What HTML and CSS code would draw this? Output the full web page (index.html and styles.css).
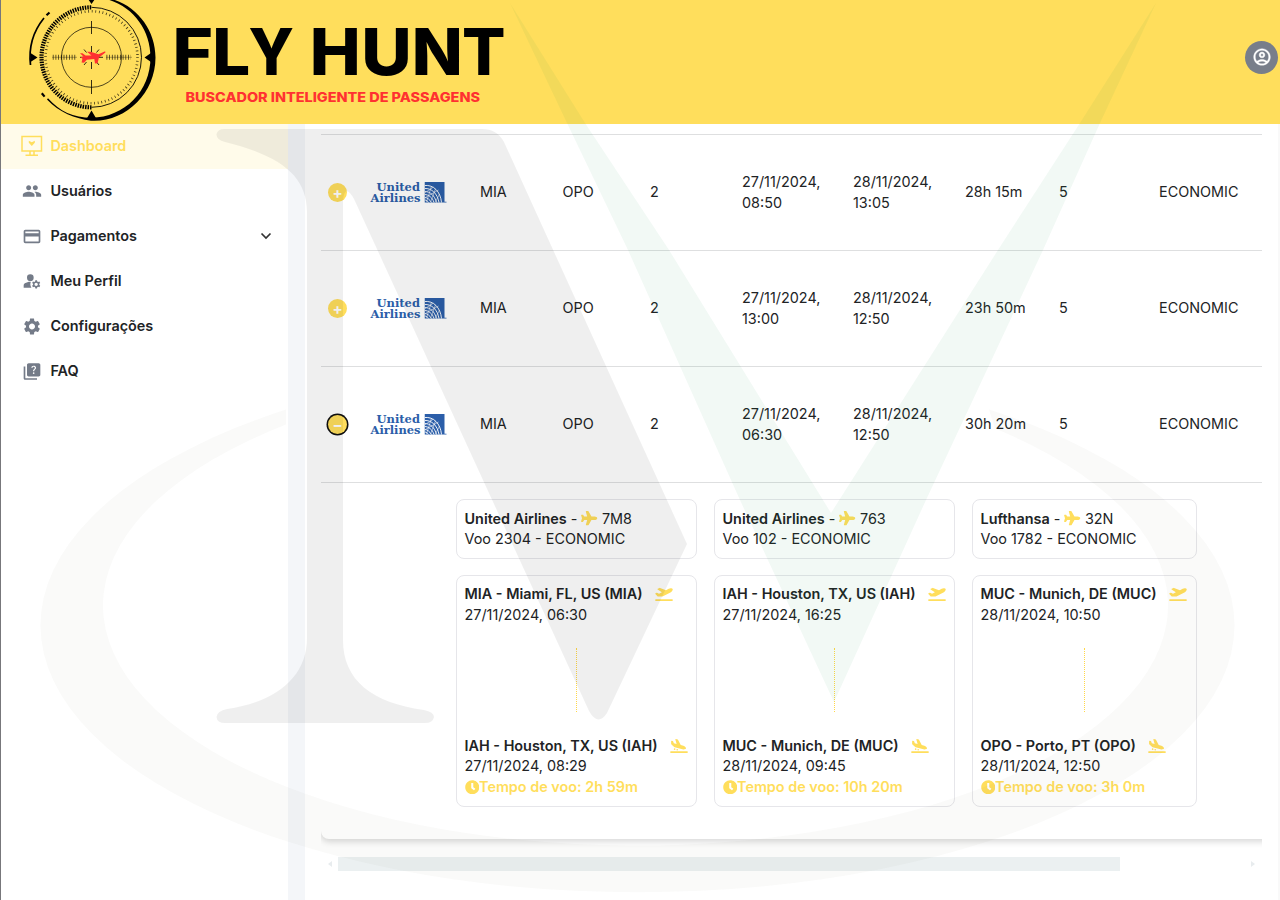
FILE: index.html
```html
<!DOCTYPE html>
<html lang="pt-BR">
<head>
<meta charset="utf-8">
<title>Fly Hunt</title>
<link rel="stylesheet" href="styles.css">
</head>
<body>
<svg class="defs" width="0" height="0" aria-hidden="true">
  <symbol id="plane" viewBox="0 0 576 512"><path d="M480 192H365.71L260.61 8.06A16.014 16.014 0 0 0 246.71 0h-65.5c-10.63 0-18.3 10.17-15.38 20.39L214.86 192H112l-43.2-57.6c-3.02-4.03-7.77-6.4-12.8-6.4H16.01C5.6 128-2.04 137.78.49 147.88L32 256 .49 364.12C-2.04 374.22 5.6 384 16.01 384H56c5.04 0 9.78-2.37 12.8-6.4L112 320h102.86l-49.03 171.6c-2.92 10.22 4.75 20.4 15.38 20.4h65.5c5.74 0 11.04-3.08 13.89-8.06L365.71 320H480c35.35 0 96-28.65 96-64s-60.65-64-96-64z"/></symbol>
  <symbol id="takeoff" viewBox="0 0 640 512"><path d="M624 448H16c-8.84 0-16 7.16-16 16v32c0 8.84 7.16 16 16 16h608c8.84 0 16-7.16 16-16v-32c0-8.84-7.16-16-16-16zM80.55 341.27c6.28 6.84 15.1 10.72 24.33 10.71l130.54-.18a65.62 65.62 0 0 0 29.64-7.12l290.96-147.65c26.74-13.57 50.71-32.94 67.02-58.31 18.31-28.48 20.3-49.09 13.07-63.65-7.21-14.57-24.74-25.27-58.25-27.45-29.85-1.94-59.54 5.92-86.28 19.48l-98.51 49.99-218.7-82.06a17.799 17.799 0 0 0-18-1.11L90.62 67.29c-10.67 5.41-13.25 19.65-5.17 28.53l156.22 98.1-103.21 52.38-72.35-36.47a17.804 17.804 0 0 0-16.07.02L9.91 230.22c-10.44 5.3-13.19 19.12-5.57 28.08l76.21 82.97z"/></symbol>
  <symbol id="landing" viewBox="0 0 640 512"><path d="M624 448H16c-8.84 0-16 7.16-16 16v32c0 8.84 7.16 16 16 16h608c8.84 0 16-7.16 16-16v-32c0-8.84-7.16-16-16-16zM44.81 205.66l88.74 80a62.607 62.607 0 0 0 25.47 13.93l287.6 78.35c26.48 7.21 54.56 8.72 81 1.36 29.67-8.27 43.44-21.21 47.25-35.71 3.83-14.5-1.73-32.71-23.37-54.96-19.28-19.82-44.35-32.79-70.83-40l-97.51-26.56L282.8 30.22c-1.51-5.81-5.95-10.35-11.66-11.91L206.05.58c-10.56-2.88-20.9 5.32-20.71 16.44l47.92 164.21-102.2-27.84-27.59-67.88c-1.93-4.89-6.01-8.57-11.02-9.93L52.72 64.75c-10.34-2.82-20.53 5-20.72 15.88l.23 101.78c.19 8.91 6.03 17.34 12.58 23.25z"/><circle cx="160" cy="372" r="30"/><circle cx="255" cy="392" r="30"/></symbol>
  <symbol id="clock" viewBox="0 0 512 512"><path d="M256 8C119 8 8 119 8 256s111 248 248 248 248-111 248-248S393 8 256 8zm57.1 350.1L224.9 294c-3.1-2.3-4.9-5.9-4.9-9.7V116c0-6.6 5.4-12 12-12h48c6.6 0 12 5.4 12 12v137.7l63.5 46.2c5.4 3.9 6.5 11.4 2.6 16.8l-28.2 38.8c-3.9 5.3-11.4 6.5-16.8 2.6z"/></symbol>
  <symbol id="globe" viewBox="55 1 22.500 21">
    <path fill="#2b5ea9" d="M55 1h20v20.5H55zM75 20.700h2v.8h-2z"/>
    <g fill="none" stroke="#eef1f6" stroke-width="1">
      <path d="M55 4.500c9-1 16 6 17 17M55 7.500c7-.5 13 5 14.500 14M55 10.500c6 0 10 4 12 11M55 13.500c4 0 8 3 9.500 8M55 16.500c3 0 5 2 7 5M55 19c2 0 3 1 4 2.500"/>
      <path stroke-width=".6" d="M57 21l5-16M61 21l5-13M66 21l4-8M55 12l9-6M55 17l14-8"/>
    </g>
  </symbol>
</svg>

<header class="header">
  <svg class="logo" width="520" height="123" viewBox="0 0 520 123">
    <g fill="none" stroke="#000">
      <circle cx="91.500" cy="57.300" r="46" stroke-width="2.600" stroke-opacity=".75" stroke-dasharray=".8 2.812"/>
      <path d="M91.500 7.300a50 50 0 0 1 0 100" stroke-width=".9"/>
      <path d="M91.500 107.300a50 50 0 0 1 0-100" stroke-width="4.200" stroke-dasharray="1.500 1"/>
      <circle cx="91.500" cy="57.300" r="30" stroke-width=".7"/>
      <path d="M30.500 65c-2-17 3-34 13.500-47" stroke-width="1.700"/>
      <path d="M46.500 15.300l3-2.800M41.800 93.300l2.800 3.300" stroke-width="2.200"/>
      <path d="M52.800 57.300h24M106.500 57.300h24.500" stroke-width="5" stroke-opacity=".75" stroke-dasharray=".8 1.900"/>
      <path d="M52 57.300h25M106 57.300h26" stroke-width=".3"/>
      <path d="M91.500 21v13M91.500 80v14M91.500 46v6.500M91.500 62v7M80 57.300h23M84 49.500l2.500 3M99 49.500l-2.500 3M84 65l2.500-3M99 65l-2.500-3" stroke-width=".8"/>
    </g>
    <path d="M47 99.500c12 13 28 19 44 21.200c34 2 64.500-27 64.500-63.200C155.500 29 135 3 107-2l-1 1c27 7 44.500 31 44.500 58.300c0 34-26 60-59 60.500c-18 0-32-6.500-43.500-19.500z"/>
    <path d="M88-1h7l-3.500 5zM86.500 119l5-8.500 5 8.500zM30.500 53v9l7-4.500zM151 53v9l-6.500-4.500z"/>
    <path fill="#ff3131" d="M80 53.200l2.500 0 3 2.200 6 .2-4.500-3.800 3.500-.1 8 2.600 5.500-2.600c2-.4 2 .5.800 1.400l-5.800 4.400-1.500 5.700-2.500.2-.7-4.500-7.500.8-2.800 3-2.400-.2.800-3.800-1.800-1.500 2.800-.8z"/>
    <g font-family="Inter, sans-serif" font-size="64" font-weight="800">
      <text x="172.500" y="75.400" textLength="40.500" lengthAdjust="spacingAndGlyphs">F</text>
      <text x="212.200" y="75.400" textLength="38" lengthAdjust="spacingAndGlyphs">L</text>
      <text x="248.500" y="75.400" textLength="45.500" lengthAdjust="spacingAndGlyphs">Y</text>
      <text x="309.800" y="75.400" textLength="51" lengthAdjust="spacingAndGlyphs">H</text>
      <text x="361.300" y="75.400" textLength="50.500" lengthAdjust="spacingAndGlyphs">U</text>
      <text x="411.800" y="75.400" textLength="51" lengthAdjust="spacingAndGlyphs">N</text>
      <text x="462" y="75.400" textLength="43.500" lengthAdjust="spacingAndGlyphs">T</text>
    </g>
    <text x="185.500" y="102" fill="#ff3131" font-family="Inter, sans-serif" font-size="13" font-weight="800" textLength="294.500" lengthAdjust="spacingAndGlyphs">BUSCADOR INTELIGENTE DE PASSAGENS</text>
  </svg>
  <div class="avatar"><svg width="20" height="20" viewBox="0 0 24 24" fill="#fff" stroke="#fff" stroke-width=".4"><path d="M12 2C6.480 2 2 6.480 2 12s4.480 10 10 10 10-4.480 10-10S17.520 2 12 2zM7.350 18.500C8.660 17.560 10.260 17 12 17s3.340.56 4.650 1.500C15.340 19.440 13.740 20 12 20s-3.340-.56-4.650-1.500zm10.790-1.380C16.450 15.800 14.320 15 12 15s-4.450.8-6.140 2.120C4.700 15.730 4 13.950 4 12c0-4.420 3.580-8 8-8s8 3.580 8 8c0 1.950-.7 3.730-1.860 5.120z"/><path d="M12 6c-1.930 0-3.500 1.570-3.500 3.500S10.070 13 12 13s3.500-1.570 3.500-3.500S13.930 6 12 6zm0 5c-.83 0-1.500-.67-1.500-1.500S11.170 8 12 8s1.500.67 1.500 1.500S12.830 11 12 11z"/></svg></div>
</header>

<div class="body">
  <nav class="sidebar">
    <a class="item active"><svg width="20" height="20" viewBox="0 0 20 20" fill="none" stroke="currentColor" stroke-width="1.500"><path d="M0 .5h19.500v14.500H0zM8 15v4M12 15v4M3.500 19.300h12.500"/><path fill="currentColor" stroke="none" d="M6.800 4.800l3 1.500 3-1.500v2l-3 3.200-3-3.200z"/></svg>Dashboard</a>
    <a class="item"><svg width="20" height="20" viewBox="0 0 24 24"><path d="M16 11c1.660 0 2.990-1.340 2.990-3S17.660 5 16 5c-1.660 0-3 1.340-3 3s1.340 3 3 3zm-8 0c1.660 0 2.990-1.340 2.990-3S9.660 5 8 5C6.340 5 5 6.340 5 8s1.340 3 3 3zm0 2c-2.330 0-7 1.170-7 3.500V19h14v-2.500c0-2.330-4.670-3.500-7-3.500zm8 0c-.29 0-.62.02-.97.05 1.160.84 1.970 1.970 1.970 3.450V19h6v-2.500c0-2.330-4.670-3.500-7-3.500z"/></svg>Usuários</a>
    <a class="item"><svg width="21" height="21" viewBox="0 0 24 24"><path d="M20 4H4c-1.110 0-1.990.89-1.990 2L2 18c0 1.110.89 2 2 2h16c1.110 0 2-.89 2-2V6c0-1.110-.89-2-2-2zm0 14H4v-6h16v6zm0-10H4V6h16v2z"/></svg>Pagamentos<svg class="chevron" width="12" height="8" viewBox="0 0 12 8" fill="none" stroke="#333" stroke-width="1.700"><path d="M1.500 1.500L6 6l4.500-4.500"/></svg></a>
    <a class="item"><svg width="20" height="20" viewBox="0 0 24 24"><circle cx="10" cy="8" r="4"/><path d="M10.670 13.020C10.450 13.010 10.230 13 10 13c-2.420 0-4.680.67-6.610 1.820C2.510 15.340 2 16.320 2 17.350V20h9.260C10.470 18.870 10 17.490 10 16c0-1.070.25-2.070.67-2.980zM20.750 16c0-.22-.03-.42-.06-.63l1.140-1.010-1-1.730-1.450.49c-.32-.27-.68-.48-1.080-.63L18 11h-2l-.3 1.490c-.4.15-.76.36-1.080.63l-1.450-.49-1 1.730 1.140 1.010c-.03.21-.06.41-.06.63s.03.42.06.63l-1.140 1.010 1 1.730 1.450-.49c.32.27.68.48 1.080.63L16 21h2l.3-1.490c.4-.15.76-.36 1.080-.63l1.450.49 1-1.730-1.140-1.010c.03-.21.06-.41.06-.63zM17 18c-1.100 0-2-.9-2-2s.9-2 2-2 2 .9 2 2-.9 2-2 2z"/></svg>Meu Perfil</a>
    <a class="item"><svg width="21" height="21" viewBox="0 0 24 24"><path d="M19.140 12.940c.04-.3.06-.61.06-.94 0-.32-.02-.64-.07-.94l2.030-1.580c.18-.14.23-.41.12-.61l-1.920-3.320c-.12-.22-.37-.29-.59-.22l-2.390.96c-.5-.38-1.030-.7-1.620-.94l-.36-2.540c-.04-.24-.24-.41-.48-.41h-3.840c-.24 0-.43.17-.47.41l-.36 2.540c-.59.24-1.130.57-1.620.94l-2.390-.96c-.22-.08-.47 0-.59.22L2.740 8.870c-.12.21-.08.47.12.61l2.030 1.580c-.05.3-.09.63-.09.94s.02.64.07.94l-2.030 1.580c-.18.14-.23.41-.12.61l1.920 3.320c.12.22.37.29.59.22l2.390-.96c.5.38 1.030.7 1.620.94l.36 2.540c.05.24.24.41.48.41h3.840c.24 0 .44-.17.47-.41l.36-2.540c.59-.24 1.130-.56 1.620-.94l2.390.96c.22.08.47 0 .59-.22l1.920-3.320c.12-.22.07-.47-.12-.61l-2.010-1.580zM12 15.600c-1.980 0-3.600-1.620-3.600-3.600s1.620-3.600 3.600-3.600 3.600 1.620 3.600 3.600-1.620 3.600-3.600 3.600z"/></svg>Configurações</a>
    <a class="item"><svg width="21" height="21" viewBox="0 0 24 24"><path d="M4 6H2v14c0 1.100.9 2 2 2h14v-2H4V6zm16-4H8c-1.100 0-2 .9-2 2v12c0 1.100.9 2 2 2h12c1.100 0 2-.9 2-2V4c0-1.100-.9-2-2-2zm-5.990 13c-.59 0-1.050-.47-1.050-1.050 0-.59.47-1.040 1.050-1.040.59 0 1.040.45 1.040 1.040-.01.580-.45 1.050-1.040 1.050zm2.500-6.170c-.63.93-1.230 1.210-1.560 1.810-.13.240-.18.400-.18 1.180h-1.520c0-.41-.06-1.080.26-1.650.41-.73 1.180-1.160 1.630-1.800.48-.68.210-1.940-1.140-1.940-.88 0-1.320.67-1.500 1.230l-1.370-.57C11.510 5.960 12.520 5 13.990 5c1.230 0 2.080.56 2.510 1.260.37.600.58 1.730.01 2.570z"/></svg>FAQ</a>
  </nav>
  <div class="gutter"></div>
  <main class="main">
    <div class="scroll">
      <section class="table">
        <div class="row"><span class="toggle">+</span><svg class="airline" width="78" height="24"><text x="6.500" y="9.500" textLength="43.500" lengthAdjust="spacingAndGlyphs">United</text><text x=".5" y="21" textLength="50" lengthAdjust="spacingAndGlyphs">Airlines</text><use href="#globe" x="54.500" y="1" width="22.500" height="21"/></svg><span>MIA</span><span>OPO</span><span>2</span><span>27/11/2024,<br>08:50</span><span>28/11/2024,<br>13:05</span><span>28h 15m</span><span>5</span><span>ECONOMIC</span></div>
        <div class="row"><span class="toggle">+</span><svg class="airline" width="78" height="24"><text x="6.500" y="9.500" textLength="43.500" lengthAdjust="spacingAndGlyphs">United</text><text x=".5" y="21" textLength="50" lengthAdjust="spacingAndGlyphs">Airlines</text><use href="#globe" x="54.500" y="1" width="22.500" height="21"/></svg><span>MIA</span><span>OPO</span><span>2</span><span>27/11/2024,<br>13:00</span><span>28/11/2024,<br>12:50</span><span>23h 50m</span><span>5</span><span>ECONOMIC</span></div>
        <div class="row"><span class="toggle open">−</span><svg class="airline" width="78" height="24"><text x="6.500" y="9.500" textLength="43.500" lengthAdjust="spacingAndGlyphs">United</text><text x=".5" y="21" textLength="50" lengthAdjust="spacingAndGlyphs">Airlines</text><use href="#globe" x="54.500" y="1" width="22.500" height="21"/></svg><span>MIA</span><span>OPO</span><span>2</span><span>27/11/2024,<br>06:30</span><span>28/11/2024,<br>12:50</span><span>30h 20m</span><span>5</span><span>ECONOMIC</span></div>
        <div class="legs">
          <div class="card"><div><b>United Airlines</b> - <svg class="i-plane"><use href="#plane"/></svg> 7M8</div><div>Voo 2304 - ECONOMIC</div></div>
          <div class="card"><div><b>United Airlines</b> - <svg class="i-plane"><use href="#plane"/></svg> 763</div><div>Voo 102 - ECONOMIC</div></div>
          <div class="card"><div><b>Lufthansa</b> - <svg class="i-plane"><use href="#plane"/></svg> 32N</div><div>Voo 1782 - ECONOMIC</div></div>
          <div class="card trip"><div><b>MIA - Miami, FL, US (MIA)</b><svg class="i-leg"><use href="#takeoff"/></svg></div><div>27/11/2024, 06:30</div><div class="dots"></div><div><b>IAH - Houston, TX, US (IAH)</b><svg class="i-leg"><use href="#landing"/></svg></div><div>27/11/2024, 08:29</div><div class="time"><svg class="i-clock"><use href="#clock"/></svg>Tempo de voo: 2h 59m</div></div>
          <div class="card trip"><div><b>IAH - Houston, TX, US (IAH)</b><svg class="i-leg"><use href="#takeoff"/></svg></div><div>27/11/2024, 16:25</div><div class="dots"></div><div><b>MUC - Munich, DE (MUC)</b><svg class="i-leg"><use href="#landing"/></svg></div><div>28/11/2024, 09:45</div><div class="time"><svg class="i-clock"><use href="#clock"/></svg>Tempo de voo: 10h 20m</div></div>
          <div class="card trip"><div><b>MUC - Munich, DE (MUC)</b><svg class="i-leg"><use href="#takeoff"/></svg></div><div>28/11/2024, 10:50</div><div class="dots"></div><div><b>OPO - Porto, PT (OPO)</b><svg class="i-leg"><use href="#landing"/></svg></div><div>28/11/2024, 12:50</div><div class="time"><svg class="i-clock"><use href="#clock"/></svg>Tempo de voo: 3h 0m</div></div>
        </div>
      </section>
    </div>
    <div class="scrollbar"><i class="arrow left"></i><i class="thumb"></i><i class="arrow right"></i></div>
  </main>
</div>

<svg class="watermark" width="1280" height="900" viewBox="0 0 1280 900" aria-hidden="true">
  <path fill="#4a4a18" fill-opacity=".026" d="M286 409.500A597 267 0 1 0 989 409.500L995 428.500A532.500 240 0 1 1 286 424.500z"/>
  <path fill="#000" fill-opacity=".062" d="M224 129H482Q497 129 504 142L687 544L607 713Q598 727 589 711L354 199Q345 183 343 200V640C343 680 372 703 424 710Q434 712 434 717Q433 723 425 723H225Q217 723 216.500 717Q217 711 227 709C276 702 307 677 307 638V212C307 177 282 156 225 142Q216 140 216.500 134Q218 129 224 129z"/>
  <path fill="#0a8a4a" fill-opacity=".055" d="M510 3L585 123L669 250L831 513L998 250L1080 123L1156 3L1100 123L1043 250L926 500L834 702L740 500L628 250L567 123z"/>
</svg>
</body>
</html>
```
FILE: styles.css
```css
* { box-sizing: border-box; }
body {
  margin: 0;
  width: 1280px;
  height: 900px;
  overflow: hidden;
  display: flex;
  flex-direction: column;
  background: #fff;
  border-left: 1px solid #77777b;
  font: 14.4px/20.6px Inter, "Liberation Sans", sans-serif;
  color: #212325;
}
.defs { position: absolute; }
.header {
  height: 123.5px;
  flex: none;
  display: flex;
  align-items: center;
  justify-content: space-between;
  padding-right: 2px;
  background: #ffde5c;
}
.logo { margin-left: -1px; }
.avatar {
  width: 33px;
  height: 33px;
  margin-top: -9px;
  border-radius: 50%;
  background: #787e8a;
  display: flex;
  align-items: center;
  justify-content: center;
}
.body { flex: 1; display: flex; }
.sidebar { width: 287px; flex: none; }
.item {
  height: 45.1px;
  display: flex;
  align-items: center;
  padding: 0 16px 0 21px;
  font-weight: 600;
  font-size: 14.4px;
}
.item > svg:first-child { fill: #747b88; width: 20px; margin-right: 8.4px; flex: none; overflow: visible; }
.item.active { background: #fffbea; color: #ffde5c; }
.item.active > svg:first-child { fill: none; }
.chevron { margin-left: auto; }
.gutter { width: 17px; background: #f4f6f9; }
.main { flex: 1; padding-left: 16px; border-right: 2px solid #f9f9f9; }
.scroll { width: 940.5px; height: 727px; overflow: hidden; }
.table {
  width: 1100px;
  height: 715.5px;
  padding-top: 10.5px;
  border-radius: 0 0 8px 8px;
  box-shadow: 0 2px 6px 1px rgba(0, 0, 0, .15);
}
.row {
  height: 116px;
  display: grid;
  grid-template-columns: 49px 110px 82.5px 87.5px 92px 111px 112px 94px 100px 262px;
  align-items: center;
  border-top: 1px solid #dedfe0;
}
.airline text {
  font: bold 11.5px "DejaVu Serif", serif;
  fill: #2b5ea9;
}
.toggle {
  width: 19px;
  height: 19px;
  margin-left: 7px;
  border-radius: 50%;
  background: #ffde5c;
  color: #fff;
  font-size: 15px;
  line-height: 19px;
  font-weight: 700;
  text-align: center;
}
.toggle.open { box-shadow: 0 0 0 1.5px #111; }
.legs {
  display: grid;
  grid-template-columns: 241.5px 241.5px 225px;
  gap: 16px 16.5px;
  padding: 16px 0 0 134.5px;
  border-top: 1px solid #dedfe0;
}
.card {
  height: 59.5px;
  border: 1px solid #e6e6ea;
  border-radius: 8px;
  padding: 8.6px 8px 0;
  white-space: nowrap;
}
.card b { font-weight: 600; }
.card.trip { height: 232px; }
.dots {
  width: 0;
  height: 64px;
  margin: 23px auto 23.5px;
  border-left: 1px dotted #ffd84a;
}
.card svg { fill: #ffde5c; }
.i-plane { width: 16.5px; height: 14.5px; vertical-align: -2px; }
.i-leg { width: 18px; height: 14px; margin-left: 12px; vertical-align: -2px; }
.i-clock { width: 14.5px; height: 14.5px; vertical-align: -2.5px; }
.time { font-weight: 600; color: #ffde5c; }
.scrollbar {
  width: 940px;
  height: 14px;
  margin-top: 6.5px;
  display: flex;
  align-items: center;
}
.thumb { width: 782px; height: 14px; margin-left: 6px; background: #ebf0f1; }
.arrow { border: 3px solid transparent; }
.arrow.left { margin-left: 4px; border-right: 4px solid #e8ecee; }
.arrow.right { margin-left: 131px; border-left: 4px solid #e8ecee; }
.watermark { position: fixed; left: 0; top: 0; pointer-events: none; }
```
